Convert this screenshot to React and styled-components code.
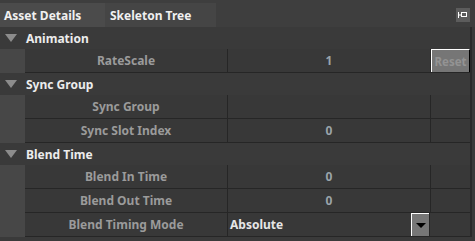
import styled, { createGlobalStyle } from "styled-components";

const GlobalStyle = createGlobalStyle`
  html, body {
    margin: 0;
    padding: 0;
    background: #3a3a3a;
  }
  body {
    font-family: "Noto Sans", "Open Sans", sans-serif;
    font-weight: 700;
    font-size: 12px;
  }
`;

const Panel = styled.div`
  width: 475px;
  height: 241px;
  background: #3a3a3a;
  overflow: hidden;
`;

const TabBar = styled.div`
  display: flex;
  align-items: flex-end;
  height: 27px;
  background: #3e3e3e;
`;

const Tab = styled.div`
  display: flex;
  align-items: center;
  height: 24px;
  width: ${(p) => p.$w}px;
  padding-left: ${(p) => p.$pad}px;
  box-sizing: border-box;
  background: ${(p) => (p.$active ? "#4b4b4b" : "#454545")};
  color: #f0f0f0;
`;

const Spacer = styled.div`
  flex: 1;
`;

const PinBox = styled.div`
  width: 14px;
  height: 14px;
  margin: 8px 5px 0 0;
  background: #5c5c5c;
  display: flex;
  align-items: center;
  justify-content: center;
  align-self: flex-start;
`;

const List = styled.div`
  width: 472px;
  box-sizing: border-box;
  border-right: 2px solid #2a2a2a;
`;

const Header = styled.div`
  display: flex;
  align-items: center;
  height: 22px;
  color: #ececec;
`;

const Arrow = styled.div`
  width: 0;
  height: 0;
  margin: 0 9px 0 5px;
  border-left: 6px solid transparent;
  border-right: 6px solid transparent;
  border-top: 8px solid #8c8c8c;
`;

const Row = styled.div`
  display: flex;
  height: 24px;
`;

const Indent = styled.div`
  width: 25px;
  background: #474747;
`;

const Cells = styled.div`
  display: flex;
  flex: 1;
  background: #383838;
  border-bottom: 1px solid #262626;
`;

const Label = styled.div`
  width: 202px;
  flex-shrink: 0;
  border-right: 1px solid #262626;
  display: flex;
  align-items: center;
  justify-content: center;
  color: #9b9b9b;
`;

const Value = styled.div`
  width: 202px;
  flex-shrink: 0;
  border-right: 1px solid #262626;
  display: flex;
  align-items: center;
  justify-content: ${(p) => (p.$left ? "space-between" : "center")};
  padding-left: ${(p) => (p.$left ? "2px" : "0")};
  box-sizing: ${(p) => (p.$left ? "border-box" : "content-box")};
  color: ${(p) => (p.$left ? "#e6e6e6" : "#9aa4aa")};
`;

const Extra = styled.div`
  flex: 1;
  display: flex;
`;

const ResetButton = styled.div`
  flex: 1;
  display: flex;
  align-items: center;
  justify-content: center;
  background: #767676;
  border-top: 1px solid #ffffff;
  border-left: 1px solid #ffffff;
  border-right: 1px solid #000000;
  color: #939393;
  font-size: 11.5px;
`;

const DropButton = styled.div`
  width: 17px;
  align-self: stretch;
  display: flex;
  align-items: center;
  justify-content: center;
  background: #777777;
  border-top: 1px solid #ffffff;
  border-left: 1px solid #ffffff;
`;

const DropArrow = styled.div`
  width: 0;
  height: 0;
  border-left: 5px solid transparent;
  border-right: 5px solid transparent;
  border-top: 5px solid #000000;
`;

const sections = [
  {
    title: "Animation",
    rows: [{ label: "RateScale", value: "1", reset: true }],
  },
  {
    title: "Sync Group",
    rows: [
      { label: "Sync Group", value: "" },
      { label: "Sync Slot Index", value: "0" },
    ],
  },
  {
    title: "Blend Time",
    rows: [
      { label: "Blend In Time", value: "0" },
      { label: "Blend Out Time", value: "0" },
      { label: "Blend Timing Mode", value: "Absolute", combo: true },
    ],
  },
];

const PinIcon = () => (
  <svg width="10" height="10" viewBox="0 0 10 10">
    <path d="M0.5 2v6M0.5 5h3" stroke="#ffffff" strokeWidth="1" fill="none" />
    <rect x="3.5" y="2.5" width="5" height="4" stroke="#ffffff" strokeWidth="1" fill="none" />
  </svg>
);

export default function App() {
  return (
    <>
      <GlobalStyle />
      <Panel>
        <TabBar>
          <Tab $active $w={105} $pad={4}>Asset Details</Tab>
          <Tab $w={111} $pad={5}>Skeleton Tree</Tab>
          <Spacer />
          <PinBox>
            <PinIcon />
          </PinBox>
        </TabBar>
        <List>
          {sections.map((s) => (
            <div key={s.title}>
              <Header>
                <Arrow />
                {s.title}
              </Header>
              {s.rows.map((r) => (
                <Row key={r.label}>
                  <Indent />
                  <Cells>
                    <Label>{r.label}</Label>
                    <Value $left={r.combo}>
                      {r.value}
                      {r.combo && (
                        <DropButton>
                          <DropArrow />
                        </DropButton>
                      )}
                    </Value>
                    <Extra>{r.reset && <ResetButton>Reset</ResetButton>}</Extra>
                  </Cells>
                </Row>
              ))}
            </div>
          ))}
        </List>
      </Panel>
    </>
  );
}
